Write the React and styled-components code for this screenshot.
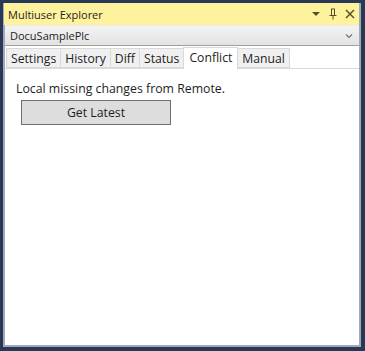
import React from "react";
import styled, { createGlobalStyle } from "styled-components";

const Global = createGlobalStyle`
  html, body {
    margin: 0;
    padding: 0;
    background: #293955;
  }
  body {
    font-family: "Open Sans", "Noto Sans", "Liberation Sans", sans-serif;
    font-size: 12px;
    color: #1e1e1e;
  }
`;

const tabs = ["Settings", "History", "Diff", "Status", "Conflict", "Manual"];

function App() {
  return (
    <>
      <Global />
      <Frame>
        <Window>
          <TitleBar>
            <span className="title">Multiuser Explorer</span>
            <div className="buttons">
              <svg width="10" height="10" viewBox="0 0 10 10">
                <path d="M1 3 L9 3 L5 7 Z" fill="#55502a" />
              </svg>
              <svg width="10" height="12" viewBox="0 0 10 12">
                <path
                  d="M3 1 H7 M3.5 1 V7 M6.5 1 V7 M1.5 7.5 H8.5 M5 8 V11.5"
                  stroke="#55502a"
                  strokeWidth="1"
                  fill="none"
                />
              </svg>
              <svg width="10" height="10" viewBox="0 0 10 10">
                <path
                  d="M1 1 L9 9 M9 1 L1 9"
                  stroke="#55502a"
                  strokeWidth="1.5"
                  fill="none"
                />
              </svg>
            </div>
          </TitleBar>
          <Combo>
            <span>DocuSamplePlc</span>
            <svg width="8" height="6" viewBox="0 0 8 6">
              <path d="M1 1.5 L4 4.5 L7 1.5" stroke="#717171" strokeWidth="1.2" fill="none" />
            </svg>
          </Combo>
          <TabStrip>
            {tabs.map((t) => (
              <Tab key={t} $active={t === "Conflict"}>
                {t}
              </Tab>
            ))}
          </TabStrip>
          <Panel>
            <Message>Local missing changes from Remote.</Message>
            <Button>Get Latest</Button>
          </Panel>
        </Window>
      </Frame>
    </>
  );
}

export default App;

const Frame = styled.div`
  width: 365px;
  height: 351px;
  box-sizing: border-box;
  padding: 3px 4px 4px 3px;
  background: #293955;
`;

const Window = styled.div`
  height: 100%;
  box-sizing: border-box;
  display: flex;
  flex-direction: column;
  background: #ffffff;
  border-right: 2px solid #a2a9b8;
  border-bottom: 2px solid #a2a9b8;
  border-left: 2px solid #a2a9b8;
`;

const TitleBar = styled.div`
  height: 22px;
  flex-shrink: 0;
  display: flex;
  align-items: center;
  justify-content: space-between;
  background: #fff29d;
  padding: 0 4px 0 4px;
  margin-left: -1px;
  font-size: 11px;
  color: #1e1e1e;

  .buttons {
    display: flex;
    align-items: center;
    gap: 7px;
  }
`;

const Combo = styled.div`
  height: 19px;
  flex-shrink: 0;
  display: flex;
  align-items: center;
  justify-content: space-between;
  padding: 0 6px 0 5px;
  background: linear-gradient(#f3f3f3, #e3e3e3);
  border-top: 1px solid #ececec;
  border-bottom: 1px solid #a0a0a0;
  font-size: 11px;
`;

const TabStrip = styled.div`
  display: flex;
  align-items: flex-end;
  height: 22px;
  flex-shrink: 0;
  padding-left: 1px;
  border-bottom: 1px solid #d9d9d9;
`;

const Tab = styled.div`
  box-sizing: border-box;
  height: ${(p) => (p.$active ? "22px" : "20px")};
  margin-bottom: ${(p) => (p.$active ? "-1px" : "0")};
  padding: ${(p) => (p.$active ? "0 5px 2px 5px" : "0 4px")};
  display: flex;
  align-items: center;
  background: ${(p) => (p.$active ? "#ffffff" : "#f0f0f0")};
  border: 1px solid #d9d9d9;
  border-bottom: ${(p) => (p.$active ? "none" : "1px solid #d9d9d9")};
  margin-right: -1px;
  font-size: 12.2px;
  position: relative;
  z-index: ${(p) => (p.$active ? 1 : 0)};
`;

const Panel = styled.div`
  flex: 1;
  padding: 12px 0 0 11px;
  display: flex;
  flex-direction: column;
  align-items: flex-start;
`;

const Message = styled.div`
  font-size: 12.3px;
  line-height: 16px;
`;

const Button = styled.button`
  margin: 3px 0 0 5px;
  width: 150px;
  height: 25px;
  background: #dddddd;
  border: 1px solid #707070;
  font-family: inherit;
  font-size: 12.3px;
  color: #1e1e1e;
  padding: 0;
`;
